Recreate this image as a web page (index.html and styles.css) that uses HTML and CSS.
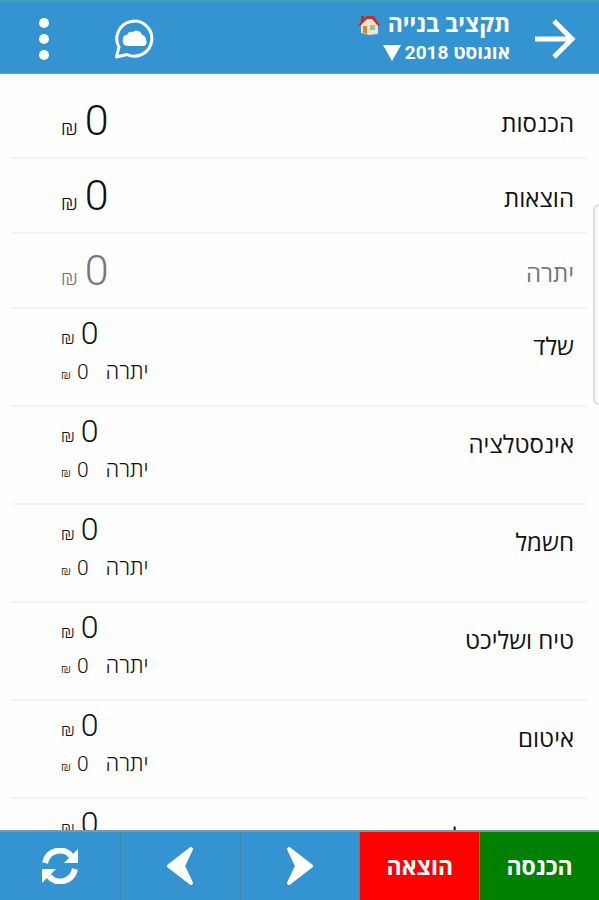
FILE: index.html
```html
<!DOCTYPE html>
<html lang="he" dir="rtl">
<head>
    <meta charset="UTF-8">
    <meta name="viewport" content="width=device-width, initial-scale=1.0">
    <title>תקציב בנייה</title>
    <link rel="stylesheet" href="styles.css">
</head>
<body>
    <header class="topbar">
        <button type="button" class="icon-btn back" aria-label="חזרה">
            <svg width="42" height="42" viewBox="0 0 42 42" fill="none" stroke="#fff" stroke-width="5">
                <path d="M0 21H37M19 3L37 21L19 39"/>
            </svg>
        </button>
        <div class="titles">
            <h1>
                תקציב בנייה
                <svg class="house" width="22" height="20" viewBox="0 0 22 20">
                    <path d="M3 8L11 2L20 9V19L11 20L3 18Z" fill="#efe3cf"/>
                    <path d="M3 1H6V7H3Z" fill="#a33a32"/>
                    <path d="M0 10L8 1L16 1L22 10L20 11L14 4L9 4L2 11Z" fill="#c4302b"/>
                    <path d="M5 11H9V19L5 18Z" fill="#d98a1f"/>
                    <path d="M12 10H17V15H12Z" fill="#a9b8a4"/>
                </svg>
            </h1>
            <button type="button" class="month">
                אוגוסט 2018
                <svg width="18" height="16" viewBox="0 0 18 16"><path d="M0 0H18L9 16Z" fill="#fff"/></svg>
            </button>
        </div>
        <button type="button" class="icon-btn chat" aria-label="גיבוי">
            <svg width="40" height="40" viewBox="0 0 40 40">
                <path d="M5 28A17.500 17.500 0 1 1 13 35.500L2.500 38Z" fill="none" stroke="#fff" stroke-width="3" stroke-linejoin="round"/>
                <path d="M13 27A5 5 0 0 1 9 20A4 4 0 0 1 13 16A5 5 0 0 1 19 13A5.500 5.500 0 0 1 28 16A5 5 0 0 1 32 21A4 4 0 0 1 30 27Z" fill="#fff"/>
            </svg>
        </button>
        <button type="button" class="icon-btn" aria-label="תפריט">
            <svg width="12" height="42" viewBox="0 0 12 42" fill="#fff">
                <circle cx="6" cy="5" r="5"/>
                <circle cx="6" cy="21" r="5"/>
                <circle cx="6" cy="37" r="5"/>
            </svg>
        </button>
    </header>

    <main class="content">
        <ul class="list">
            <li class="row total">
                <span class="name">הכנסות</span>
                <div class="amount"><b>0</b><i>₪</i></div>
            </li>
            <li class="row total">
                <span class="name">הוצאות</span>
                <div class="amount"><b>0</b><i>₪</i></div>
            </li>
            <li class="row total balance">
                <span class="name">יתרה</span>
                <div class="amount"><b>0</b><i>₪</i></div>
            </li>
            <li class="row">
                <span class="name">שלד</span>
                <div class="values">
                    <div class="amount"><b>0</b><i>₪</i></div>
                    <div class="rest"><span>יתרה</span><b>0</b><i>₪</i></div>
                </div>
            </li>
            <li class="row">
                <span class="name">אינסטלציה</span>
                <div class="values">
                    <div class="amount"><b>0</b><i>₪</i></div>
                    <div class="rest"><span>יתרה</span><b>0</b><i>₪</i></div>
                </div>
            </li>
            <li class="row">
                <span class="name">חשמל</span>
                <div class="values">
                    <div class="amount"><b>0</b><i>₪</i></div>
                    <div class="rest"><span>יתרה</span><b>0</b><i>₪</i></div>
                </div>
            </li>
            <li class="row">
                <span class="name">טיח ושליכט</span>
                <div class="values">
                    <div class="amount"><b>0</b><i>₪</i></div>
                    <div class="rest"><span>יתרה</span><b>0</b><i>₪</i></div>
                </div>
            </li>
            <li class="row">
                <span class="name">איטום</span>
                <div class="values">
                    <div class="amount"><b>0</b><i>₪</i></div>
                    <div class="rest"><span>יתרה</span><b>0</b><i>₪</i></div>
                </div>
            </li>
            <li class="row">
                <span class="name">אביזרי חשמל</span>
                <div class="values">
                    <div class="amount"><b>0</b><i>₪</i></div>
                    <div class="rest"><span>יתרה</span><b>0</b><i>₪</i></div>
                </div>
            </li>
        </ul>
    </main>

    <footer class="toolbar">
        <button type="button" class="income">הכנסה</button>
        <button type="button" class="expense">הוצאה</button>
        <button type="button" aria-label="החודש הבא">
            <svg width="28" height="40" viewBox="0 0 28 40">
                <path d="M3 3L25 20L3 37L11 20Z" fill="#fff" stroke="#fff" stroke-width="4" stroke-linejoin="round"/>
            </svg>
        </button>
        <button type="button" aria-label="החודש הקודם">
            <svg width="28" height="40" viewBox="0 0 28 40">
                <path d="M25 3L3 20L25 37L17 20Z" fill="#fff" stroke="#fff" stroke-width="4" stroke-linejoin="round"/>
            </svg>
        </button>
        <button type="button" aria-label="רענון">
            <svg width="36" height="36" viewBox="0 0 36 36">
                <path d="M3 15C6 1 23 -1 29 8" fill="none" stroke="#fff" stroke-width="6"/>
                <path d="M36 1V15H22Z" fill="#fff"/>
                <path d="M33 21C30 35 13 37 7 28" fill="none" stroke="#fff" stroke-width="6"/>
                <path d="M0 35V21H14Z" fill="#fff"/>
            </svg>
        </button>
    </footer>

    <div class="side-handle"></div>
</body>
</html>
```
FILE: styles.css
```css
* {
    box-sizing: border-box;
}
body {
    position: relative;
    display: flex;
    flex-direction: column;
    height: 100vh;
    margin: 0;
    overflow: hidden;
    background-color: #fefefe;
    color: #111;
    font-family: Roboto, "Open Sans", "Noto Sans", sans-serif;
    font-weight: 300;
}
button {
    padding: 0;
    border: none;
    background: none;
    color: #fff;
    font-family: inherit;
    cursor: pointer;
}
svg {
    display: block;
}
b, i {
    font-weight: 300;
    font-style: normal;
}

/* top bar */
.topbar {
    display: flex;
    align-items: center;
    height: 74px;
    padding: 3px 22px 0 38px;
    border-top: 2px solid #40a0b4;
    border-bottom: 1px solid #7c9db5;
    background-color: #3494d2;
    color: #fff;
}
.titles {
    flex: 1;
    margin-right: 25px;
}
.titles h1 {
    display: flex;
    align-items: center;
    gap: 8px;
    margin: 0;
    font-size: 23px;
    line-height: 28px;
    font-weight: 700;
}
.month {
    display: flex;
    align-items: center;
    gap: 4px;
    font-size: 19px;
    line-height: 28px;
    font-weight: 700;
}
.chat {
    margin-left: 64px;
}

/* list */
.content {
    flex: 1;
    min-height: 0;
    overflow-y: auto;
    scrollbar-width: none;
    padding: 10px 12px 0;
}
.list {
    margin: 0;
    padding: 0;
    list-style: none;
}
.row {
    display: flex;
    justify-content: space-between;
    height: 98px;
    padding: 6px 13px 0 49px;
    border-bottom: 2px solid #f3f3f3;
}
.name {
    padding-top: 16px;
    font-size: 24px;
    line-height: 32px;
    font-weight: 400;
}
.amount, .rest {
    display: flex;
    justify-content: flex-end;
    align-items: baseline;
}
.amount {
    gap: 6px;
    line-height: 36px;
}
.amount b {
    font-size: 32px;
}
.amount i {
    font-size: 18px;
}
.rest {
    gap: 6px;
    line-height: 32px;
}
.rest span {
    margin-left: 11px;
    font-size: 22px;
}
.rest b {
    font-size: 21px;
}
.rest i {
    font-size: 13px;
}
.total {
    height: 75px;
}
.total .name {
    padding-top: 18px;
}
.total .amount {
    gap: 7px;
    line-height: 60px;
}
.total .amount b {
    font-size: 43px;
}
.total .amount i {
    font-size: 22px;
}
.balance {
    color: #777;
}

/* bottom bar */
.toolbar {
    display: grid;
    grid-template-columns: repeat(5, 1fr);
    height: 70px;
    border-top: 2px solid #7b98ab;
    background-color: #3494d2;
}
.toolbar button {
    display: flex;
    justify-content: center;
    align-items: center;
    border-left: 1px solid #4583ab;
    font-size: 23px;
    font-weight: 700;
}
.toolbar button:last-child {
    border-left: none;
}
.toolbar .income {
    background-color: #008000;
}
.toolbar .expense {
    background-color: #f00;
}

.side-handle {
    position: absolute;
    top: 204px;
    right: 0;
    width: 6px;
    height: 201px;
    border: 2px solid #ddd;
    border-right: none;
    border-radius: 6px 0 0 6px;
    background-color: #fafafa;
}
```
